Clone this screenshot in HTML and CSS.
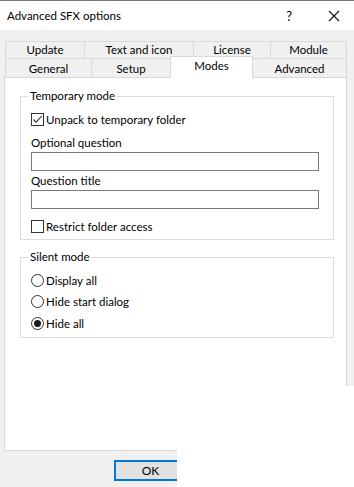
FILE: index.html
```html
<!DOCTYPE html>
<html>

<head>
  <meta charset="utf-8">
  <meta name="viewport" content="width=device-width, initial-scale=1">
  <title>Advanced SFX options</title>
  <link rel="stylesheet" href="styles.css">
</head>

<body>
	<div class="window">
		<div class="titlebar">
			<span class="title">Advanced SFX options</span>
			<span class="help">?</span>
			<svg class="close" width="12" height="12" viewBox="0 0 12 12">
				<path d="M1 1 L11 11 M11 1 L1 11" stroke="#111" stroke-width="1.1" fill="none"/>
			</svg>
		</div>

		<div class="tabs">
			<div class="tab-row top-row">
				<div class="tab w-update">Update</div>
				<div class="tab w-text">Text and icon</div>
				<div class="tab w-license">License</div>
				<div class="tab w-module">Module</div>
			</div>
			<div class="tab-row bottom-row">
				<div class="tab w-general">General</div>
				<div class="tab w-setup">Setup</div>
				<div class="tab w-modes active">Modes</div>
				<div class="tab w-advanced">Advanced</div>
			</div>
		</div>

		<div class="panel">
			<div class="group">
				<div class="group-title">Temporary mode</div>
				<label class="check-row first">
					<span class="checkbox">
						<svg width="11" height="11" viewBox="0 0 11 11">
							<path d="M1.5 5.5 L4.2 8.3 L9.6 2" stroke="#222" stroke-width="1.1" fill="none"/>
						</svg>
					</span>
					Unpack to temporary folder
				</label>
				<div class="field-label">Optional question</div>
				<div class="input"></div>
				<div class="field-label second">Question title</div>
				<div class="input"></div>
				<label class="check-row last">
					<span class="checkbox"></span>
					Restrict folder access
				</label>
			</div>

			<div class="group silent">
				<div class="group-title">Silent mode</div>
				<label class="radio-row first">
					<span class="radio"></span>
					Display all
				</label>
				<label class="radio-row">
					<span class="radio"></span>
					Hide start dialog
				</label>
				<label class="radio-row">
					<span class="radio checked"></span>
					Hide all
				</label>
			</div>
		</div>

		<div class="buttons">
			<button type="button" class="butn">OK</button>
		</div>

		<!-- parts of the capture that were blank -->
		<div class="blank blank-right"></div>
		<div class="blank blank-bottom"></div>
	</div>
</body>

</html>
```

FILE: styles.css
```css
body {
	margin: 0;
	background: #ffffff;
	font-family: Lato, "Noto Sans", sans-serif;
	font-size: 11.5px;
	color: #000;
}

.window {
	position: relative;
	width: 354px;
	height: 487px;
	background: #f0f0f0;
	overflow: hidden;
}

.titlebar {
	height: 29px;
	background: #fff;
	border-top: 1px solid #7a7a7a;
	display: flex;
	align-items: center;
	padding-left: 7px;
}

.title {
	flex: 1;
	font-size: 11.5px;
}

.help {
	font-size: 13px;
	margin-right: 36px;
}

.close {
	margin-right: 14px;
}

/* tabs */
.tabs {
	padding: 11px 0 0 5px;
}

.tab-row {
	display: flex;
}

.tab {
	box-sizing: border-box;
	border: 1px solid #d9d9d9;
	border-bottom: none;
	margin-left: -1px;
	text-align: center;
	background: #f0f0f0;
}

.tab:first-child {
	margin-left: 0;
}

.top-row .tab {
	height: 17px;
	line-height: 15px;
}

.bottom-row .tab {
	height: 19px;
	line-height: 19px;
	border-top: 1px solid #d9d9d9;
}

.w-update { width: 80px; }
.w-text { width: 110px; }
.w-license { width: 78px; }
.w-module { width: 77px; }
.w-general { width: 87px; }
.w-setup { width: 80px; }
.w-modes { width: 83px; }
.w-advanced { width: 95px; }

.bottom-row .tab.active {
	background: #fff;
	height: 22px;
	margin-top: -2px;
	margin-bottom: -1px;
	line-height: 17px;
	position: relative;
	z-index: 1;
}

/* panel */
.panel {
	box-sizing: border-box;
	margin-left: 4px;
	width: 343px;
	height: 374px;
	background: #fff;
	border: 1px solid #d9d9d9;
	padding: 18px 12px 0 15px;
}

.group {
	border: 1px solid #dcdcdc;
	padding: 0 10px 5px 10px;
}

.group.silent {
	margin-top: 17px;
}

.group-title {
	width: fit-content;
	background: #fff;
	margin: -9px 0 0 -3px;
	padding: 0 2px;
	line-height: 16px;
}

.check-row,
.radio-row {
	display: flex;
	align-items: center;
	height: 16px;
	gap: 2px;
}

.check-row.first {
	margin-top: 7px;
}

.check-row.last {
	margin-top: 9px;
}

.checkbox {
	box-sizing: border-box;
	width: 13px;
	height: 13px;
	border: 1px solid #333;
	background: #fff;
	display: flex;
	align-items: center;
	justify-content: center;
}

.field-label {
	margin-top: 8px;
	line-height: 16px;
}

.field-label.second {
	margin-top: 2px;
}

.input {
	box-sizing: border-box;
	margin-top: 1px;
	width: 288px;
	height: 19px;
	border: 1px solid #7a7a7a;
	background: #fff;
}

.radio-row {
	margin-top: 5px;
}

.radio-row.first {
	margin-top: 7px;
}

.radio-row:last-child {
	margin-top: 6px;
	margin-bottom: 1px;
}

.radio {
	box-sizing: border-box;
	width: 13px;
	height: 13px;
	border: 1px solid #333;
	border-radius: 50%;
	background: #fff;
	display: flex;
	align-items: center;
	justify-content: center;
}

.radio.checked::after {
	content: "";
	width: 7px;
	height: 7px;
	border-radius: 50%;
	background: #1a1a1a;
}

/* bottom buttons */
.buttons {
	padding: 9px 0 0 114px;
}

.butn {
	box-sizing: border-box;
	width: 73px;
	height: 21px;
	background: #e1e1e1;
	border: 2px solid #0078d7;
	font-family: Lato, "Noto Sans", sans-serif;
	font-size: 12px;
	padding: 0;
	color: #000;
}

.blank {
	position: absolute;
	background: #fff;
}

.blank-right {
	left: 346px;
	top: 386px;
	width: 8px;
	height: 101px;
}

.blank-bottom {
	left: 177px;
	top: 448px;
	width: 177px;
	height: 39px;
}
```
